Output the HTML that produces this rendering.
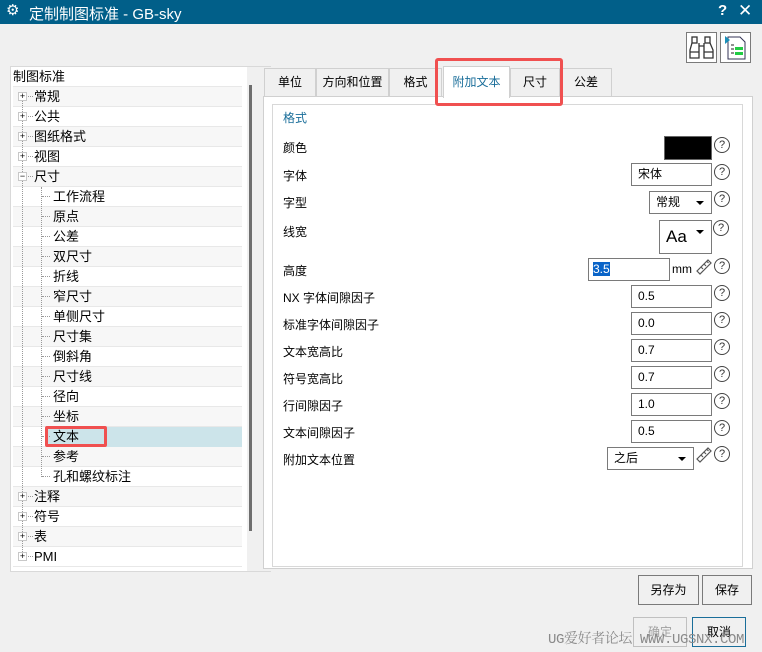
<!DOCTYPE html>
<html><head><meta charset="utf-8"><style>
*{box-sizing:border-box;margin:0;padding:0}
body{width:762px;height:652px;background:#f0f0f0;font-family:"Liberation Sans","Noto Sans CJK SC",sans-serif;font-size:12px;color:#000;position:relative;overflow:hidden}
.a{position:absolute}
.title{left:0;top:0;width:762px;height:24px;background:#015f89;color:#fff;font-size:15px}
.tree{left:10px;top:66px;width:261px;height:506px;background:#fff;border:1px solid #d9d9d9}
.row{position:absolute;left:2px;width:229px;height:20px;border-bottom:1px solid #e8e8e8;line-height:19px;font-size:13px}
.pl{position:absolute;left:5px;top:5px;width:9px;height:9px;border:1px solid #c8c8c8;background:#fff;font-size:9px;line-height:7px;text-align:center;color:#000;z-index:3}
.d{position:absolute;left:15px;top:9px;width:5px;border-top:1px dotted #999}
.t{position:absolute;left:21px}
.cd{position:absolute;left:29px;top:9px;width:8px;border-top:1px dotted #999}
.ct{position:absolute;left:40px}
.tab{position:absolute;top:68px;height:28px;border:1px solid #d0d0d0;border-bottom:none;background:#f0f0f0;text-align:center;line-height:27px;font-size:12px}
.lbl{position:absolute;left:283px;font-size:12px}
.inp{position:absolute;left:631px;width:81px;height:23px;border:1px solid #7a7a7a;background:#fff;padding-left:6px;line-height:21px;font-size:12px}
.q{position:absolute;left:714px;width:16px;height:16px;border:1px solid #444;border-radius:50%;font-size:11px;line-height:14px;text-align:center;color:#333;background:#fff}
.btn{position:absolute;border:1px solid #7a7a7a;background:#f0f0f0;text-align:center;font-size:12px}
.dd:after{content:"";position:absolute;right:7px;top:9px;border:4px solid transparent;border-top:4px solid #000}
</style></head><body>
<div class="a title"><span class="a" style="left:6px;top:1px;font-size:15px">⚙</span><span class="a" style="left:29px;top:3px">定制制图标准 - GB-sky</span><span class="a" style="left:718px;top:2px;font-weight:bold;font-size:15px">?</span><span class="a" style="left:738px;top:1px;font-size:17px">✕</span></div>
<div class="btn" style="left:686px;top:32px;width:31px;height:31px;background:#fff">
<svg width="29" height="29" viewBox="0 0 29 29"><g fill="none" stroke="#333" stroke-width="1.3"><rect x="5" y="4" width="5" height="6"/><rect x="18" y="4" width="5" height="6"/><path d="M5 10 L3 17 V25 H12 V10 M23 10 L26 17 V25 H17 V10 M12 13 H17 M3 19 H12 M17 19 H26"/></g></svg></div>
<div class="btn" style="left:720px;top:32px;width:31px;height:31px;background:#fff">
<svg width="29" height="29" viewBox="0 0 29 29"><path d="M7 4 H19 L24 9 V26 H7 Z" fill="#fff" stroke="#335" stroke-width="1"/><path d="M4 3 L9 7 L4 11 Z" fill="#1a8fb8"/><g stroke="#222"><path d="M10 12 H13 M10 16 H13 M10 20 H13"/></g><rect x="14" y="14" width="8" height="3" fill="#2c4"/><rect x="14" y="19" width="8" height="3" fill="#2c4"/></svg></div>

<div class="a tree">
<div class="a" style="left:236px;top:0;width:24px;height:504px;background:#f0f0f0"></div>
<div class="a" style="left:238px;top:18px;width:3px;height:446px;background:#6e6e6e"></div>
<div class="row" style="top:0">制图标准</div>
<div class="row" style="top:20px;background:#f7f7f7"><span class="pl">+</span><span class="d"></span><span class="t">常规</span></div>
<div class="row" style="top:40px"><span class="pl">+</span><span class="d"></span><span class="t">公共</span></div>
<div class="row" style="top:60px;background:#f7f7f7"><span class="pl">+</span><span class="d"></span><span class="t">图纸格式</span></div>
<div class="row" style="top:80px"><span class="pl">+</span><span class="d"></span><span class="t">视图</span></div>
<div class="row" style="top:100px;background:#f7f7f7"><span class="pl">−</span><span class="d"></span><span class="t">尺寸</span></div>
<div class="row" style="top:120px"><span class="cd"></span><span class="ct">工作流程</span></div>
<div class="row" style="top:140px;background:#f7f7f7"><span class="cd"></span><span class="ct">原点</span></div>
<div class="row" style="top:160px"><span class="cd"></span><span class="ct">公差</span></div>
<div class="row" style="top:180px;background:#f7f7f7"><span class="cd"></span><span class="ct">双尺寸</span></div>
<div class="row" style="top:200px"><span class="cd"></span><span class="ct">折线</span></div>
<div class="row" style="top:220px;background:#f7f7f7"><span class="cd"></span><span class="ct">窄尺寸</span></div>
<div class="row" style="top:240px"><span class="cd"></span><span class="ct">单侧尺寸</span></div>
<div class="row" style="top:260px;background:#f7f7f7"><span class="cd"></span><span class="ct">尺寸集</span></div>
<div class="row" style="top:280px"><span class="cd"></span><span class="ct">倒斜角</span></div>
<div class="row" style="top:300px;background:#f7f7f7"><span class="cd"></span><span class="ct">尺寸线</span></div>
<div class="row" style="top:320px"><span class="cd"></span><span class="ct">径向</span></div>
<div class="row" style="top:340px;background:#f7f7f7"><span class="cd"></span><span class="ct">坐标</span></div>
<div class="row" style="top:360px"><div class="a" style="left:34px;top:0;width:195px;height:20px;background:#cce4ea"></div><span class="cd"></span><span class="ct">文本</span><div class="a" style="left:32px;top:-1px;width:62px;height:21px;border:3px solid #f05050;border-radius:2px"></div></div>
<div class="row" style="top:380px;background:#f7f7f7"><span class="cd"></span><span class="ct">参考</span></div>
<div class="row" style="top:400px"><span class="cd"></span><span class="ct">孔和螺纹标注</span></div>
<div class="row" style="top:420px;background:#f7f7f7"><span class="pl">+</span><span class="d"></span><span class="t">注释</span></div>
<div class="row" style="top:440px"><span class="pl">+</span><span class="d"></span><span class="t">符号</span></div>
<div class="row" style="top:460px;background:#f7f7f7"><span class="pl">+</span><span class="d"></span><span class="t">表</span></div>
<div class="row" style="top:480px"><span class="pl">+</span><span class="d"></span><span class="t">PMI</span></div>
<div class="a" style="left:11px;top:27px;height:464px;border-left:1px dotted #999;z-index:2"></div>
<div class="a" style="left:30px;top:120px;height:290px;border-left:1px dotted #999;z-index:2"></div>
</div>

<div class="tab" style="left:264px;width:52px">单位</div>
<div class="tab" style="left:316px;width:73px">方向和位置</div>
<div class="tab" style="left:389px;width:53px">格式</div>
<div class="tab" style="left:510px;width:50px">尺寸</div>
<div class="tab" style="left:560px;width:52px">公差</div>
<div class="a" style="left:263px;top:96px;width:490px;height:473px;border:1px solid #d0d0d0;background:#fff"></div>
<div class="tab" style="left:443px;top:66px;width:67px;height:32px;background:#fff;color:#1a6e9a;line-height:30px;z-index:2">附加文本</div>
<div class="a" style="left:435px;top:58px;width:128px;height:48px;border:3px solid #f05050;border-radius:3px;z-index:3"></div>
<div class="a" style="left:272px;top:104px;width:471px;height:463px;border:1px solid #d8d8d8"></div>

<div class="lbl" style="top:109px;color:#1a6e9a">格式</div>
<div class="lbl" style="top:139px">颜色</div>
<div class="lbl" style="top:167px">字体</div>
<div class="lbl" style="top:194px">字型</div>
<div class="lbl" style="top:223px">线宽</div>
<div class="lbl" style="top:262px">高度</div>
<div class="lbl" style="top:289px">NX 字体间隙因子</div>
<div class="lbl" style="top:316px">标准字体间隙因子</div>
<div class="lbl" style="top:343px">文本宽高比</div>
<div class="lbl" style="top:370px">符号宽高比</div>
<div class="lbl" style="top:397px">行间隙因子</div>
<div class="lbl" style="top:424px">文本间隙因子</div>
<div class="lbl" style="top:451px">附加文本位置</div>

<div class="a" style="left:664px;top:136px;width:48px;height:24px;background:#000;border:1px solid #666"></div>
<div class="inp" style="top:163px">宋体</div>
<div class="inp dd" style="left:649px;width:63px;top:191px">常规</div>
<div class="inp dd" style="left:659px;width:53px;top:220px;height:34px;line-height:32px;font-size:17px">Aa</div>
<div class="inp" style="left:588px;top:258px;width:82px;padding-left:4px"><span style="background:#0a64c8;color:#fff">3.5</span></div>
<div class="a" style="left:672px;top:262px;font-size:12px">mm</div>
<svg class="a" style="left:695px;top:258px" width="18" height="18" viewBox="0 0 18 18"><g fill="none" stroke="#555" stroke-width="1.2"><path d="M2 13 L13 2 L16 5 L5 16 Z M6 9 L8 11 M9 6 L11 8 M12 3.5 L13.5 5"/></g></svg>
<div class="inp" style="top:285px">0.5</div>
<div class="inp" style="top:312px">0.0</div>
<div class="inp" style="top:339px">0.7</div>
<div class="inp" style="top:366px">0.7</div>
<div class="inp" style="top:393px">1.0</div>
<div class="inp" style="top:420px">0.5</div>
<div class="inp dd" style="left:607px;width:87px;top:447px">之后</div>
<svg class="a" style="left:695px;top:446px" width="18" height="18" viewBox="0 0 18 18"><g fill="none" stroke="#555" stroke-width="1.2"><path d="M2 13 L13 2 L16 5 L5 16 Z M6 9 L8 11 M9 6 L11 8 M12 3.5 L13.5 5"/></g></svg>

<div class="q" style="top:137px">?</div>
<div class="q" style="top:164px">?</div>
<div class="q" style="top:191px">?</div>
<div class="q" style="left:713px;top:220px">?</div>
<div class="q" style="top:258px">?</div>
<div class="q" style="top:285px">?</div>
<div class="q" style="top:312px">?</div>
<div class="q" style="top:339px">?</div>
<div class="q" style="top:366px">?</div>
<div class="q" style="top:393px">?</div>
<div class="q" style="top:420px">?</div>
<div class="q" style="top:446px">?</div>

<div class="btn" style="left:638px;top:575px;width:61px;height:30px;line-height:28px">另存为</div>
<div class="btn" style="left:702px;top:575px;width:50px;height:30px;line-height:28px">保存</div>
<div class="btn" style="left:633px;top:617px;width:54px;height:30px;line-height:28px;color:#a0a0a0;border-color:#c0c0c0">确定</div>
<div class="btn" style="left:692px;top:617px;width:54px;height:30px;line-height:28px;border-color:#1a6e9a">取消</div>
<div class="a" style="left:548px;top:628px;font-family:'Liberation Mono','Noto Serif CJK SC',monospace;font-size:14px;color:#8a8a8a;letter-spacing:-0.4px;white-space:nowrap">UG爱好者论坛 WWW.UGSNX.COM</div>
</body></html>
